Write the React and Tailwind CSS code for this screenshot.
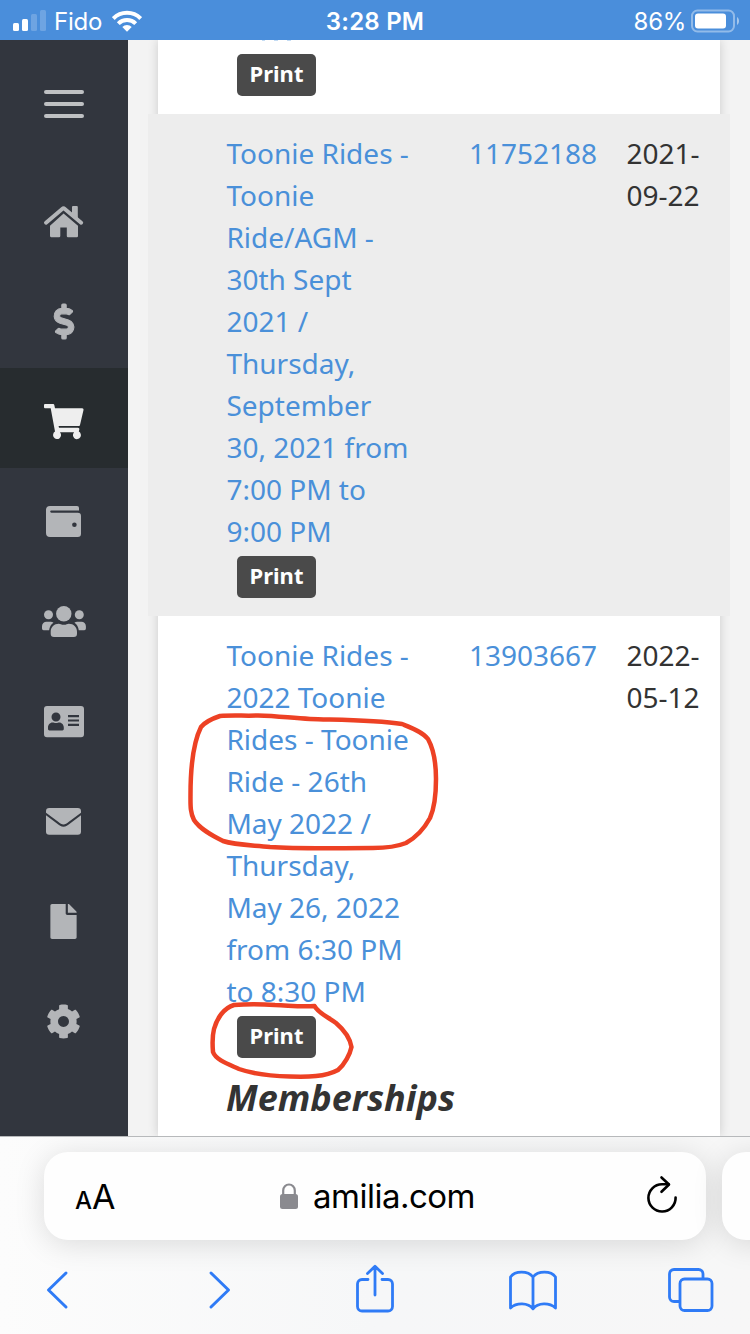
import { FaCog, FaDollarSign, FaFile } from 'react-icons/fa';

const HomeIcon = () => (
  <svg className="h-12 w-12" viewBox="0 0 48 48" fill="currentColor">
    <path d="M32 9a1 1 0 0 1 1-1h3.800a1 1 0 0 1 1 1v13l-5.800-5z" />
    <path d="M6 24.700 22.200 10.900a2 2 0 0 1 2.600 0L41.200 24.700" fill="none" stroke="currentColor" strokeWidth="3.900" strokeLinecap="round" />
    <path d="M23.600 15.600 38 27.800V38a1.200 1.200 0 0 1-1.200 1.200h-8.800a1.200 1.200 0 0 1-1.200-1.200v-8.600h-6.500V38a1.200 1.200 0 0 1-1.200 1.200h-8A1.200 1.200 0 0 1 10 38V27.800z" />
  </svg>
);

const DollarIcon = () => (
  <FaDollarSign className="h-[35px] w-[35px] -translate-x-[0.5px] -translate-y-px overflow-visible" stroke="currentColor" strokeWidth="16" />
);

const CartIcon = () => (
  <svg className="h-12 w-12" viewBox="0 0 48 48" fill="currentColor">
    <path d="M5 6h8.200c.6 0 1 .4 1.100 1l.7 3.300h27.200c.9 0 1.500.8 1.300 1.600L40 27c-.1.6-.7 1-1.300 1H18.600l.4 1.800h19c.9 0 1.500.8 1.300 1.600l-.5 2.200a4 4 0 1 1-4.700.7H20a4 4 0 1 1-5-.7L10.700 10.300H5a1 1 0 0 1-1-1V7a1 1 0 0 1 1-1z" />
  </svg>
);

const WalletIcon = () => (
  <svg className="h-12 w-12" viewBox="0 0 48 48" fill="currentColor">
    <path
      fillRule="evenodd"
      d="M10 8h27a2 2 0 0 1 2 2v2.500H11.300a1.100 1.100 0 0 0 0 2.200h26.400A3.300 3.300 0 0 1 41 18v17.800a3.300 3.300 0 0 1-3.300 3.300H10a4 4 0 0 1-4-4V12a4 4 0 0 1 4-4zm24.400 16.400a2.300 2.300 0 1 0 0 4.600 2.300 2.300 0 0 0 0-4.600z"
    />
  </svg>
);

const UsersIcon = () => (
  <svg className="h-12 w-12" viewBox="0 0 48 48" fill="currentColor">
    <circle cx="8.500" cy="16.700" r="4.500" />
    <circle cx="39.300" cy="16.700" r="4.500" />
    <circle cx="23.800" cy="15.700" r="7.700" />
    <path d="M6.500 23.700h4.200c1.100 0 2 .4 2.800 1-2.400 1.500-4 4.200-4.400 7.500H3.600A1.600 1.600 0 0 1 2 30.600v-2.400a4.500 4.500 0 0 1 4.500-4.500z" />
    <path d="M41.400 23.700h-4.200c-1.100 0-2 .4-2.800 1 2.400 1.500 4 4.200 4.400 7.500h5.500a1.600 1.600 0 0 0 1.600-1.600v-2.400a4.500 4.500 0 0 0-4.500-4.500z" />
    <path d="M18.800 25.700c1.500 0 2.500 1.100 5 1.100s3.500-1.100 5-1.100c4.800 0 8.200 3.400 8.200 8v2.100a3.300 3.300 0 0 1-3.300 3.300H14a3.300 3.300 0 0 1-3.300-3.300v-2.100c0-4.600 3.500-8 8.100-8z" />
  </svg>
);

const IdCardIcon = () => (
  <svg className="h-12 w-12" viewBox="0 0 48 48" fill="currentColor">
    <path
      fillRule="evenodd"
      d="M7 8h34a3 3 0 0 1 3 3v25.200a3 3 0 0 1-3 3H7a3 3 0 0 1-3-3V11a3 3 0 0 1 3-3zm9 6.500a4.500 4.500 0 1 0 0 9 4.500 4.500 0 0 0 0-9zM12.600 24.500C9.800 24.500 8 27 8 29.500v1.500c0 .8.600 1.400 1.400 1.400h13c.8 0 1.400-.600 1.400-1.400v-1.500c0-2.500-1.900-5-4.600-5-1 0-1.600.600-3.200.600s-2.200-.600-3.400-.600zM28 17v2.200h11V17zM28 21.400v2.200h11v-2.200zM28 25.800V28h11v-2.200z"
    />
  </svg>
);

const MailIcon = () => (
  <svg className="h-12 w-12" viewBox="0 0 48 48" fill="currentColor">
    <path d="M9.200 10h28.600a3.200 3.200 0 0 1 3.200 3.200v1.500L28.500 24c-1.500 1.200-3.300 2.600-5 2.600s-3.500-1.400-5-2.600L6 14.700v-1.500A3.200 3.200 0 0 1 9.200 10z" />
    <path d="M6 17.200l11.300 8.600c1.600 1.200 3.900 3 6.200 3s4.600-1.800 6.200-3L41 17.200v16.400a3.200 3.200 0 0 1-3.200 3.200H9.200A3.200 3.200 0 0 1 6 33.600z" />
  </svg>
);

const FileIcon = () => <FaFile className="h-[35px] w-[35px] -translate-x-px -translate-y-px" />;
const CogIcon = () => <FaCog className="h-[35px] w-[35px] -translate-x-px -translate-y-px" />;

const navItems = [
  { name: 'home', Icon: HomeIcon },
  { name: 'billing', Icon: DollarIcon },
  { name: 'purchases', Icon: CartIcon, active: true },
  { name: 'wallet', Icon: WalletIcon },
  { name: 'members', Icon: UsersIcon },
  { name: 'cards', Icon: IdCardIcon },
  { name: 'messages', Icon: MailIcon },
  { name: 'documents', Icon: FileIcon },
  { name: 'settings', Icon: CogIcon },
];

const purchases = [
  {
    lines: [
      'Toonie Rides -', 'Toonie', 'Ride/AGM -', '30th Sept', '2021 /',
      'Thursday,', 'September', '30, 2021 from', '7:00 PM to', '9:00 PM',
    ],
    invoice: '11752188',
    date: ['2021-', '09-22'],
    rowClass: 'mx-[-10px] bg-[#ededed] pl-[78.4px] h-[502px]',
  },
  {
    lines: [
      'Toonie Rides -', '2022 Toonie', 'Rides - Toonie', 'Ride - 26th', 'May 2022 /',
      'Thursday,', 'May 26, 2022', 'from 6:30 PM', 'to 8:30 PM',
    ],
    invoice: '13903667',
    date: ['2022-', '05-12'],
    rowClass: 'pl-[68.4px] h-[460px]',
  },
];

function StatusBar() {
  return (
    <header className="grid h-10 shrink-0 grid-cols-3 items-center bg-[#4a8edb] font-['Inter',sans-serif] text-[24px] leading-10 text-white">
      <div className="flex items-center pl-[13px]">
        <svg className="h-[22px] w-[34px]" viewBox="0 0 34 22" fill="currentColor">
          <rect x="0" y="13" width="6" height="8" rx="1.500" />
          <rect x="9" y="9" width="6" height="12" rx="1.500" />
          <rect x="18" y="4" width="6" height="17" rx="1.500" opacity=".2" />
          <rect x="27" y="0" width="6" height="21" rx="1.500" opacity=".2" />
        </svg>
        <span className="ml-[7px] w-[50px] pt-0.5 whitespace-nowrap tracking-[-0.2px]">Fido</span>
        <svg className="ml-[8px] h-[22px] w-[30px]" viewBox="0 0 30 22" fill="none" stroke="currentColor" strokeWidth="4">
          <path d="M1.300 8.500a19.400 19.400 0 0 1 27.400 0" />
          <path d="M6.300 13.600a12.300 12.300 0 0 1 17.400 0" />
          <path d="M15 21.700 10.300 17a6.700 6.700 0 0 1 9.400 0z" fill="currentColor" stroke="none" />
        </svg>
      </div>
      <span className="pt-0.5 text-center font-semibold tracking-[0.2px]">3:28 PM</span>
      <div className="flex items-center justify-end pr-[10px]">
        <span className="mr-[5px] pt-0.5 tracking-[-0.3px]">86%</span>
        <svg className="h-[24px] w-[49px]" viewBox="0 0 49 24" fill="none">
          <rect x="1" y="1.500" width="42" height="21" rx="5.500" stroke="white" strokeOpacity=".4" strokeWidth="2" />
          <rect x="4" y="4.500" width="31" height="15" rx="3" fill="white" />
          <path d="M46 8c2.700 1.500 2.700 6.500 0 8z" fill="white" fillOpacity=".5" />
        </svg>
      </div>
    </header>
  );
}

function Sidebar() {
  return (
    <nav className="flex w-32 shrink-0 flex-col bg-[#32363e] text-[#b3b5b8]">
      <div className="flex h-32 flex-col items-center gap-2 pt-[50px]">
        <div className="h-1 w-10 rounded-full bg-[#bfc1c3]" />
        <div className="h-1 w-10 rounded-full bg-[#bfc1c3]" />
        <div className="h-1 w-10 rounded-full bg-[#bfc1c3]" />
      </div>
      {navItems.map(({ name, Icon, active }) => (
        <div
          key={name}
          className={`flex h-[100px] items-center justify-center pt-2 ${active ? 'bg-[#272c2f] text-[#eeeeee]' : ''}`}
        >
          <Icon />
        </div>
      ))}
    </nav>
  );
}

function PrintButton() {
  return (
    <button className="block h-[42px] w-[79px] rounded-[5px] bg-[#4a4a4a] pb-[4px] text-center text-[22px] leading-[36px] font-bold text-white">
      Print
    </button>
  );
}

function PurchaseRow({ item }) {
  return (
    <div className={`flex pt-[18px] text-[28px] leading-[42px] ${item.rowClass}`}>
      <div className="w-[242.6px] shrink-0 text-[#4a90d9]">
        {item.lines.map((line) => (
          <p key={line} className="whitespace-nowrap">{line}</p>
        ))}
        <div className="pt-[4px] pl-[10.6px]">
          <PrintButton />
        </div>
      </div>
      <div className="w-[157.4px] shrink-0 text-[#4a90d9]">{item.invoice}</div>
      <div className="text-[#333333]">
        {item.date.map((part) => (
          <p key={part}>{part}</p>
        ))}
      </div>
    </div>
  );
}

function BrowserBar() {
  return (
    <footer className="relative h-[198px] shrink-0 overflow-hidden border-t border-[#b7b9bb] bg-linear-to-r from-[#fcfcfc] via-[#f6f7f8] to-[#f7f7f7] font-['Inter',sans-serif]">
      <div className="flex gap-4 pt-[15px] pl-11">
        <div className="flex h-[88px] w-[662px] shrink-0 items-center rounded-[24px] bg-[#fefefe] pr-[28px] pl-[31px] text-black shadow-[0_4px_30px_rgba(0,0,0,0.13)]">
          <div className="flex w-[205px] items-baseline pt-0.5">
            <span className="text-[24px] leading-none font-medium">A</span>
            <span className="text-[34px] leading-none">A</span>
          </div>
          <svg className="h-[26px] w-[18px]" viewBox="0 0 18 26" fill="none">
            <rect x="0" y="11" width="18" height="15" rx="2.500" fill="#8a8a8f" />
            <path d="M3.200 12V7.500a5.800 6 0 0 1 11.600 0V12" stroke="#8a8a8f" strokeWidth="2.200" />
          </svg>
          <span className="ml-[15px] pt-0.5 text-[33px] tracking-[-0.5px]">amilia.com</span>
          <svg className="ml-auto h-[38px] w-[32px] -translate-y-0.5" viewBox="0 0 32 38" fill="none" stroke="currentColor" strokeWidth="2.600" strokeLinecap="round" strokeLinejoin="round">
            <path d="M22.500 9.300H16A13.600 13.600 0 1 0 29.600 22.500" />
            <path d="M15.500 2.500l7.500 7-7.500 7.300" />
          </svg>
        </div>
        <div className="h-[88px] w-[100px] shrink-0 rounded-[24px] bg-[#fefefe] shadow-[0_4px_30px_rgba(0,0,0,0.13)]" />
      </div>
      <div className="flex items-center pt-[24px] pl-[46px] text-[#2f7bf6]">
        <svg className="h-[50px] w-[24px]" viewBox="0 0 24 50" fill="none" stroke="currentColor" strokeWidth="3" strokeLinecap="round" strokeLinejoin="round">
          <path d="M20 9 2.500 26 20 43" />
        </svg>
        <svg className="ml-[138px] h-[50px] w-[24px]" viewBox="0 0 24 50" fill="none" stroke="currentColor" strokeWidth="3" strokeLinecap="round" strokeLinejoin="round">
          <path d="M3 9l17.500 17L3 43" />
        </svg>
        <svg className="ml-[123px] h-[50px] w-[40px]" viewBox="0 0 40 50" fill="none" stroke="currentColor" strokeWidth="2.800" strokeLinecap="round" strokeLinejoin="round">
          <path d="M13 15.500H7A4.500 4.500 0 0 0 2.500 20v22.500A4.500 4.500 0 0 0 7 47h26a4.500 4.500 0 0 0 4.500-4.500V20a4.500 4.500 0 0 0-4.500-4.500h-6M20 31V3M12.500 9.500 20 2.200l7.500 7.300" />
        </svg>
        <svg className="ml-[113px] h-[50px] w-[50px]" viewBox="0 0 50 50" fill="none" stroke="currentColor" strokeWidth="2.800" strokeLinecap="round" strokeLinejoin="round">
          <path d="M25 13c-5-6.500-18-6.500-22.500 0v31c6-5.500 17.500-5.500 22.500.800 5-6.300 16.500-6.300 22.500-.800V13C43 6.500 30 6.500 25 13zM25 13v31.500" />
        </svg>
        <svg className="ml-[108px] h-[50px] w-[48px]" viewBox="0 0 48 50" fill="none" stroke="currentColor" strokeWidth="2.800">
          <path d="M13.500 37.500H8A4.500 4.500 0 0 1 3.500 33v-23A4.500 4.500 0 0 1 8 5.500h24.500A4.500 4.500 0 0 1 37 10v5" />
          <rect x="14" y="15" width="32" height="31.500" rx="4.500" />
        </svg>
      </div>
    </footer>
  );
}

// Red pen marks drawn over the page
function Markup() {
  return (
    <svg className="pointer-events-none absolute top-0 left-0 h-[1334px] w-[750px]" viewBox="0 0 750 1334" fill="none" stroke="#ed4124" strokeWidth="4.500" strokeLinecap="round" strokeLinejoin="round">
      <path d="M258 715.500C279 716 290 718 310 719C340 720 375 720 402 724C412 728 423 732 428 739C434 750 436 765 436 779C436 796 434 809 430 818C424 829 415 838 406 843C396 847 385 848 373 848C335 848 300 849 270 847C250 845 235 845 223 841C211 835 200 829 194 820C190 812 190.500 805 190.500 795C190.500 770 193 743 201 727C206 721 214 718 220 716C232 715 245 716 258 715.500Z" />
      <path d="M314.500 1006C300 1007 290 1005.500 275 1005C262 1004 245 1004 234 1005C224 1008 217 1018 214 1029C212 1037 212.500 1046 213 1052C216 1060 228 1064 239 1069C256 1075 272 1076 290 1076.500C308 1077 325 1077 338 1070C345 1064 350 1054 351.500 1047C350 1038 343 1029 336 1023C328 1017 318 1013 314.500 1006Z" />
    </svg>
  );
}

export default function App() {
  return (
    <div className="relative flex h-[1334px] w-[750px] flex-col overflow-hidden bg-[#f3f3f3] font-['Noto_Sans',sans-serif]">
      <StatusBar />
      <div className="flex h-[1096px] shrink-0 overflow-hidden">
        <Sidebar />
        <main className="h-full flex-1 pr-[30px] pl-[30px]">
          <section className="h-full bg-white shadow-[0_0_10px_rgba(0,0,0,0.16)]">
            {/* lower edge of the row scrolled under the status bar */}
            <div className="flex h-[14px] items-start gap-[9px] pl-[104px]">
              <div className="h-px w-[3px] bg-[#c4dcf4]" />
              <div className="h-px w-[4px] bg-[#c4dcf4]" />
              <div className="h-px w-[4px] bg-[#c4dcf4]" />
            </div>
            <div className="h-[60px] pl-[79px]">
              <PrintButton />
            </div>
            {purchases.map((item) => (
              <PurchaseRow key={item.invoice} item={item} />
            ))}
            <h2 className="pl-[68px] text-[36px] leading-[44px] font-bold text-[#333333] italic">Memberships</h2>
          </section>
        </main>
      </div>
      <BrowserBar />
      <Markup />
    </div>
  );
}
